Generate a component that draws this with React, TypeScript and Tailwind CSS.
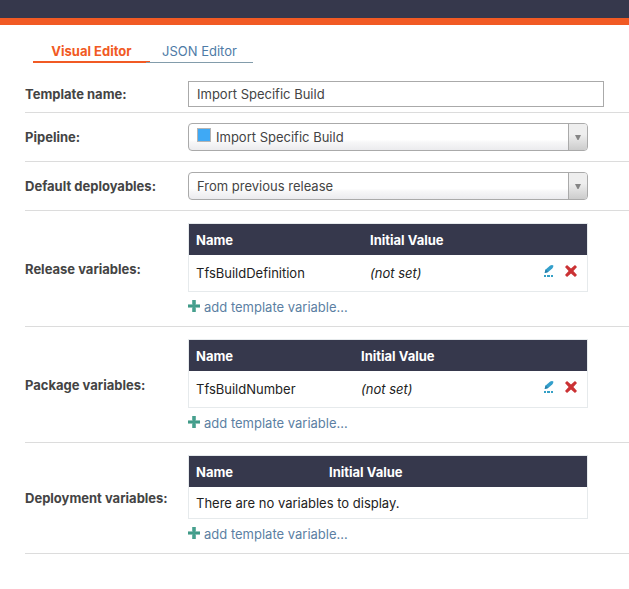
import type { ReactNode } from "react";

type Variable = { name: string; value?: string };

function Row({ label, htmlFor, className, children }: { label: string; htmlFor?: string; className: string; children: ReactNode }) {
  return (
    <div className={"grid grid-cols-[163px_minmax(0,1fr)] items-center border-b border-[#dcdcdc] " + className}>
      {htmlFor ? (
        <label htmlFor={htmlFor} className="whitespace-nowrap pb-px font-bold text-[#444]">{label}</label>
      ) : (
        <span className="whitespace-nowrap pb-2 font-bold text-[#444]">{label}</span>
      )}
      <div>{children}</div>
    </div>
  );
}

function Select({ id, value, swatch }: { id: string; value: string; swatch?: boolean }) {
  return (
    <div className="relative h-7 max-w-[400px]">
      <select
        id={id}
        className={
          "h-full w-full appearance-none rounded border border-[#aaa] bg-linear-to-b from-white from-60% via-[#f7f7f8] via-70% to-[#ebebee] pr-7 pb-px text-[#444] outline-none " +
          (swatch ? "pl-[27px]" : "pl-2")
        }
      >
        <option>{value}</option>
      </select>
      {swatch && <span className="pointer-events-none absolute top-[5px] left-[9px] size-[14px] border border-[#b4b4b4] bg-[#3fa9f5]" />}
      <span className="pointer-events-none absolute inset-y-px right-px flex w-[19px] items-center justify-center rounded-r-[3px] border-l border-[#aaa] bg-linear-to-b from-[#eee] from-40% to-[#ccc]">
        <svg width="6" height="5" viewBox="0 0 6 5" className="mt-px" aria-hidden="true">
          <path d="M0 0H6L3.5 5H2.5Z" fill="#858585" />
        </svg>
      </span>
    </div>
  );
}

function EditIcon() {
  return (
    <svg width="10" height="12" viewBox="0 0 10 12" className="block" aria-hidden="true">
      <path d="M0.6 8 1.6 4.6 6.2 0.6 8 0 9.4 0.4 9.2 2 8.2 3.6 4.2 7Z" fill="#339fcb" />
      <path d="M0.6 8.1 4.2 7 1.6 4.6Z" fill="#277ea8" />
      <path d="M0 10h2v2H0zM3 10h3v2H3zM7 10h2v2H7z" fill="#35a0c6" />
    </svg>
  );
}

function DeleteIcon() {
  return (
    <svg width="12" height="12" viewBox="0 0 12 12" className="block" aria-hidden="true">
      <path d="M2 0 6 3.6 10 0 12 2 8.4 6 12 10 10 12 6 8.4 2 12 0 10 3.6 6 0 2Z" fill="#cb3234" />
    </svg>
  );
}

function PlusIcon() {
  return (
    <svg width="12" height="12" viewBox="0 0 12 12" className="mb-0.5" aria-hidden="true">
      <path d="M4 0H8V4H12V8H8V12H4V8H0V4H4Z" fill="#93c6bb" />
      <path d="M5 0H7V5H12V7H7V12H5V7H0V5H5Z" fill="#3f9a88" />
      <path d="M4.5 0H7.5V12H4.5Z" fill="#46a08e" />
    </svg>
  );
}

function VariableTable({ variables, nameCol }: { variables: Variable[]; nameCol: string }) {
  return (
    <>
      <div className="max-w-[400px] border border-[#e6eaec]">
        <table className="w-full table-fixed text-left">
          <thead className="h-[31px] bg-[#36384c] text-white">
            <tr>
              <th className={"pl-[7px] font-bold " + nameCol}>Name</th>
              <th className="font-bold">Initial Value</th>
              <th className="w-[58px]" aria-label="Actions" />
            </tr>
          </thead>
          <tbody className="text-[#222]">
            {variables.length === 0 && (
              <tr className="h-[31px]">
                <td colSpan={3} className="pl-[7px]">There are no variables to display.</td>
              </tr>
            )}
            {variables.map((v) => (
              <tr key={v.name} className="h-9">
                <td className="pl-[7px]">{v.name}</td>
                <td className="italic">{v.value ?? "(not set)"}</td>
                <td>
                  <div className="flex items-center gap-[11px] pb-1 pl-[15px]">
                    <button type="button" aria-label={"Edit " + v.name}><EditIcon /></button>
                    <button type="button" aria-label={"Delete " + v.name}><DeleteIcon /></button>
                  </div>
                </td>
              </tr>
            ))}
          </tbody>
        </table>
      </div>
      <button type="button" className="flex h-[30px] items-center gap-1 text-[#5c7fa3]">
        <PlusIcon />
        add template variable…
      </button>
    </>
  );
}

export default function App() {
  return (
    <div className="bg-white font-['Inter','Liberation_Sans',sans-serif] text-[13px] leading-5 text-[#444]">
      <header className="h-[25px] border-b-[7px] border-[#f15a24] bg-[#36384c]" />
      <nav className="flex items-end pt-4 pl-[33px]">
        <a href="#visual" className="flex h-[22px] w-[117px] justify-center border-b-2 border-[#f15a24] font-bold text-[#f15a24]">Visual Editor</a>
        <a href="#json" className="-ml-1 flex h-[22px] w-[107px] justify-center border-b border-[#829cab] text-[#4e7ba6]">JSON Editor</a>
      </nav>
      <form className="pt-[18px] pl-[25px]">
        <Row label="Template name:" htmlFor="name" className="pb-[5px]">
          <input id="name" type="text" defaultValue="Import Specific Build" className="block h-[26px] w-full max-w-[416px] border border-[#aaa] px-2 text-[#444] outline-none" />
        </Row>
        <Row label="Pipeline:" htmlFor="pipeline" className="py-[10px]">
          <Select id="pipeline" value="Import Specific Build" swatch />
        </Row>
        <Row label="Default deployables:" htmlFor="deployables" className="py-[10px]">
          <Select id="deployables" value="From previous release" />
        </Row>
        <Row label="Release variables:" className="pt-3 pb-1">
          <VariableTable variables={[{ name: "TfsBuildDefinition" }]} nameCol="w-[181px]" />
        </Row>
        <Row label="Package variables:" className="pt-3 pb-1">
          <VariableTable variables={[{ name: "TfsBuildNumber" }]} nameCol="w-[172px]" />
        </Row>
        <Row label="Deployment variables:" className="pt-3 pb-1">
          <VariableTable variables={[]} nameCol="w-[140px]" />
        </Row>
      </form>
    </div>
  );
}
